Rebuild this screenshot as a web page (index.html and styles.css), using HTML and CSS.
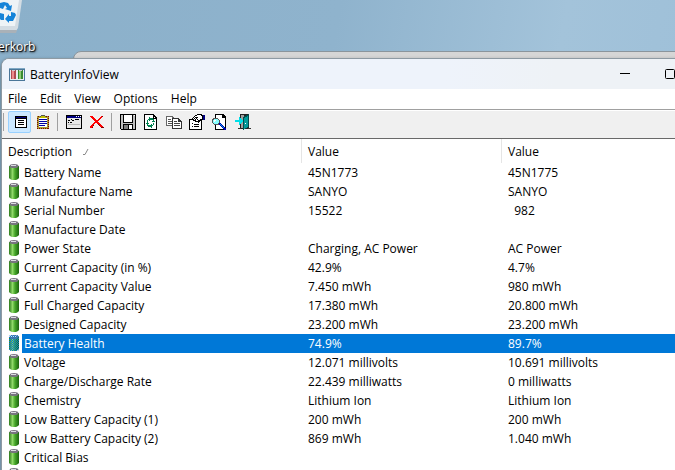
FILE: index.html
```
<!DOCTYPE html>
<html lang="en">
<head>
    <meta charset="UTF-8">
    <title>BatteryInfoView</title>
    <link rel="stylesheet" href="styles.css">
</head>
<body>
    <!-- shared icons -->
    <svg class="defs" aria-hidden="true">
        <linearGradient id="green">
            <stop offset="0" stop-color="#2c7a1a"/>
            <stop offset="0.35" stop-color="#8fd868"/>
            <stop offset="0.6" stop-color="#45a528"/>
            <stop offset="1" stop-color="#1d6410"/>
        </linearGradient>
        <pattern id="dots" width="2" height="2" patternUnits="userSpaceOnUse">
            <path fill="#0078d7" d="M0 0h1v1H0zM1 1h1v1H1z"/>
        </pattern>
        <symbol id="battery" viewBox="0 0 10 16">
            <path fill="url(#green)" d="M0 2h10v12l-1 1-2 1H3l-2-1-1-1z"/>
            <ellipse cx="5" cy="2" rx="4.500" ry="2" fill="#77747f"/>
            <path fill="#dddbe4" d="M2 1h5v1H2z"/>
        </symbol>
    </svg>

    <div class="desktop">
        <div class="shortcut">
            <svg class="bin" width="22" height="33" viewBox="0 0 22 33">
                <path fill="#d3dce3" d="M0 0h22l-4 28-2 3H0z"/>
                <path fill="#eef3f6" d="M0 0h19l-4 26H0z"/>
                <path fill="#a9b1b8" d="M0 30h17l-1 3H0z"/>
                <path fill="#1583d8" d="M0 3l4-1 4 1 2 3 2-1-1 6-6-2 2-1-2-3-2 4-3-1zM11 12l4 1-2-4 3 6-3 6H9v2l-4-4 4-5v2h2zM0 13l4 1v6H1l-1-1z"/>
            </svg>
            <span class="shortcut-label">erkorb</span>
        </div>

        <div class="back-window"></div>

        <div class="window">
            <div class="titlebar">
                <svg width="16" height="13" viewBox="0 0 16 13" shape-rendering="crispEdges">
                    <path fill="#4a7699" d="M0 0h16v13H0z"/>
                    <path fill="#e8eef1" d="M1 2h14v10H1z"/>
                    <path fill="#7fa8c4" d="M0 0h16v1H0z"/>
                    <path fill="#b04a50" d="M2 2h5v9H2z"/>
                    <path fill="#ec8a8d" d="M3 3h2v8H3z"/>
                    <path fill="#3b8a30" d="M9 2h5v9H9z"/>
                    <path fill="#8ccc72" d="M10 3h2v8h-2z"/>
                    <path fill="#c9c9d0" d="M3 2h3v1H3zM10 2h3v1h-3z"/>
                </svg>
                <h1 class="title">BatteryInfoView</h1>
                <button class="caption" aria-label="Minimize">
                    <svg width="10" height="10" viewBox="0 0 10 10"><path fill="#000" d="M0 4h10v1H0z"/></svg>
                </button>
                <button class="caption" aria-label="Maximize">
                    <svg width="12" height="10" viewBox="0 0 12 10"><rect x="0.5" y="0.5" width="9" height="9" rx="1" fill="none" stroke="#000"/></svg>
                </button>
                <button class="caption" aria-label="Close">
                    <svg width="10" height="10" viewBox="0 0 10 10"><path stroke="#000" d="M0 0l10 10M10 0L0 10"/></svg>
                </button>
            </div>

            <nav class="menubar">
                <button>File</button>
                <button>Edit</button>
                <button>View</button>
                <button>Options</button>
                <button>Help</button>
            </nav>

            <div class="toolbar">
                <button class="pressed" aria-label="Show all">
                    <svg viewBox="0 0 16 16">
                        <path d="M3 2h12v12H3z"/>
                        <path fill="#fff" d="M4 5h10v8H4z"/>
                        <path fill="#000080" d="M4 3h10v1H4z"/>
                        <path d="M6 6h6v1H6zM6 8h6v1H6zM6 10h6v1H6z"/>
                    </svg>
                </button>
                <button aria-label="Battery log">
                    <svg viewBox="0 0 16 16">
                        <path fill="#a89a30" d="M2 2h12v13H2z"/>
                        <path fill="none" stroke="#800000" stroke-dasharray="1 1" d="M2.500 2.500h11v12h-11z"/>
                        <path fill="#fff" d="M4 4h8v9H4z"/>
                        <path fill="#0000a0" d="M4 5h8v1H4zM4 7h8v1H4zM4 9h8v1H4zM4 11h6v1H4z"/>
                        <path fill="#c0c000" d="M5 2h6v2H5z"/>
                        <path fill="#555" d="M6 1h4v1H6zM5 2h1v1H5zM10 2h1v1h-1z"/>
                    </svg>
                </button>
                <span class="separator"></span>
                <button aria-label="Options">
                    <svg viewBox="0 0 16 16">
                        <path d="M0 1h16v14H0z"/>
                        <path fill="#e8e8e8" d="M1 4h14v10H1z"/>
                        <path fill="#000080" d="M1 2h14v2H1z"/>
                        <path fill="#fff" d="M10 2h1v1h-1zM12 2h1v1h-1zM14 2h1v1h-1z"/>
                        <path d="M2 6h2v1H2zM5 5h1v1H5zM6 6h2v1H6zM9 5h4v1H9zM2 8h1v1H2zM4 8h2v1H4z"/>
                        <path fill="#bbb" d="M2 10h12v1H2z"/>
                    </svg>
                </button>
                <button aria-label="Delete">
                    <svg viewBox="0 0 16 16">
                        <path fill="#f00" d="M1 2h3v1h1v1h1v1h1v1h2V5h1V4h1V3h1V2h2v1h-1v1h-1v1h-1v1h-1v1h-1v1h1v1h1v1h1v1h1v1h1v1h1v1h-2v-1h-2v-1h-1v-1h-1v-1H8V9H6v1H5v1H4v2H3v1H1v-2h1v-1h1v-1h1V9h1V8h1V7H5V6H4V5H3V4H2V3H1z"/>
                        <path fill="#800000" d="M3 13h1v1H3zM4 11h1v1H4zM9 10h1v1H9zM10 11h1v1h-1zM12 13h3v1h-3zM13 2h1v1h-1z"/>
                    </svg>
                </button>
                <span class="separator"></span>
                <button aria-label="Save">
                    <svg viewBox="0 0 16 16">
                        <path d="M0 0h16v16H1v-1H0z"/>
                        <path fill="#c0c0c0" d="M1 1h2v8h10V1h2v14H1z"/>
                        <path fill="#fff" d="M4 1h8v7H4z"/>
                        <path fill="#fff" d="M14 1h1v1h-1z"/>
                        <path d="M3 10h10v5H3z"/>
                        <path fill="#fff" d="M9 11h3v4H9z"/>
                        <path fill="#808080" d="M4 11h4v4H4z"/>
                    </svg>
                </button>
                <button aria-label="Refresh">
                    <svg viewBox="0 0 16 16">
                        <path d="M1 0h9l4 4v12H1z"/>
                        <path fill="#fff" d="M2 1h8v4h3v10H2z"/>
                        <path fill="#fff" d="M11 3h1v1h-1z"/>
                        <path fill="#008050" d="M6 3h1v1h3v1h1v2h1v1H9V7h1V6H7v1H6V6H5V5h1zM4 6h1v3H4zM9 14H8v-1H5v-1H4v-2H3V9h3v1H5v1h3v-1h1v1h1v1H9zM10 9h1v2h-1z"/>
                    </svg>
                </button>
                <button aria-label="Copy">
                    <svg viewBox="0 0 16 16">
                        <path fill="#666" d="M0 2h6l3 3v7H0z"/>
                        <path fill="#fff" d="M1 3h5v2h2v6H1z"/>
                        <path fill="#555" d="M2 5h3v1H2zM2 7h4v1H2zM2 9h4v1H2z"/>
                        <path fill="#333" d="M6 4h6l4 4v7H6z"/>
                        <path fill="#fff" d="M7 5h5v3h3v6H7z"/>
                        <path fill="#444" d="M8 7h3v1H8zM8 9h6v1H8zM8 11h6v1H8z"/>
                    </svg>
                </button>
                <button aria-label="Properties">
                    <svg viewBox="0 0 16 16">
                        <path d="M0 5h13v11H0z"/>
                        <path fill="#fff" d="M1 6h11v9H1z"/>
                        <path d="M3 9h1v1H3zM5 10h5v1H5zM3 12h1v1H3zM5 12h5v1H5z"/>
                        <path d="M3 4h1V3h1V2h1V1h2V0h5v1h2v5h-2v1h-2v1h-1v1H9V8H6V7H4V6H3z"/>
                        <path fill="#fff" d="M4 4h1v1H4zM5 5h1v1H5zM6 4h1v1H6zM5 3h1v1H5zM7 5h1v1H7zM6 2h2v1H6zM8 4h1v1H8zM8 1h4v1h1v3h-2v1H9V3H8zM7 6h2v1H7z"/>
                        <path fill="#000080" d="M14 1h2v5h-2z"/>
                    </svg>
                </button>
                <button aria-label="Find">
                    <svg viewBox="0 0 16 16">
                        <path d="M3 0h8l3 3v13H3z"/>
                        <path fill="#fff" d="M4 1h6v3h3v11H4z"/>
                        <path fill="#555" d="M1 4h5v1h1v1h1v4H7v1H2v-1H1V9H0V5h1z"/>
                        <path fill="#8ff" d="M2 5h4v1h1v3H6v1H2V9H1V6h1z"/>
                        <path fill="#fff" d="M2 6h2v1H3v1H2z"/>
                        <path fill="#0000b0" d="M7 9h2v1h1v1h1v1h1v1h1v1h1v2h-2v-1h-1v-1h-1v-1H9v-1H8v-1H7z"/>
                        <path fill="#00a0e0" d="M8 10h1v1H8zM9 11h1v1H9zM10 12h1v1h-1zM11 13h1v1h-1z"/>
                    </svg>
                </button>
                <button aria-label="Exit">
                    <svg viewBox="0 0 16 16">
                        <path fill="#222" d="M5 0h9v15H5z"/>
                        <path fill="#a0a0a0" d="M6 1h3v13H6z"/>
                        <path fill="#004c4c" d="M8 3l6-3v13l-6 3z"/>
                        <path fill="#009a9a" d="M9 4l4-2v11l-4 2z"/>
                        <path fill="#fff" d="M10 9h1v1h-1z"/>
                        <path fill="#00dfe8" d="M0 6h4V3h1v1h1v1h1v1h1v2H7v1H6v1H5v1H4V8H0z"/>
                        <path fill="#333" d="M3 14h3v1H3zM13 14h3v1h-3z"/>
                    </svg>
                </button>
            </div>

            <table class="list">
                <thead>
                    <tr>
                        <th class="description">Description
                            <svg class="sort" width="6" height="6" viewBox="0 0 6 6"><path fill="none" stroke="#888" d="M0 5.500h2L5 0"/></svg>
                        </th>
                        <th class="value">Value</th>
                        <th>Value</th>
                    </tr>
                </thead>
                <tbody>
                    <tr><td><div class="name"><svg><use href="#battery"/></svg><span>Battery Name</span></div></td><td>45N1773</td><td>45N1775</td></tr>
                    <tr><td><div class="name"><svg><use href="#battery"/></svg><span>Manufacture Name</span></div></td><td>SANYO</td><td>SANYO</td></tr>
                    <tr><td><div class="name"><svg><use href="#battery"/></svg><span>Serial Number</span></div></td><td>15522</td><td>&nbsp; 982</td></tr>
                    <tr><td><div class="name"><svg><use href="#battery"/></svg><span>Manufacture Date</span></div></td><td></td><td></td></tr>
                    <tr><td><div class="name"><svg><use href="#battery"/></svg><span>Power State</span></div></td><td>Charging, AC Power</td><td>AC Power</td></tr>
                    <tr><td><div class="name"><svg><use href="#battery"/></svg><span>Current Capacity (in %)</span></div></td><td>42.9%</td><td>4.7%</td></tr>
                    <tr><td><div class="name"><svg><use href="#battery"/></svg><span>Current Capacity Value</span></div></td><td>7.450 mWh</td><td>980 mWh</td></tr>
                    <tr><td><div class="name"><svg><use href="#battery"/></svg><span>Full Charged Capacity</span></div></td><td>17.380 mWh</td><td>20.800 mWh</td></tr>
                    <tr><td><div class="name"><svg><use href="#battery"/></svg><span>Designed Capacity</span></div></td><td>23.200 mWh</td><td>23.200 mWh</td></tr>
                    <tr class="selected"><td><div class="name"><svg><use href="#battery"/><rect width="10" height="16" rx="2" fill="url(#dots)"/></svg><span>Battery Health</span></div></td><td>74.9%</td><td>89.7%</td></tr>
                    <tr><td><div class="name"><svg><use href="#battery"/></svg><span>Voltage</span></div></td><td>12.071 millivolts</td><td>10.691 millivolts</td></tr>
                    <tr><td><div class="name"><svg><use href="#battery"/></svg><span>Charge/Discharge Rate</span></div></td><td>22.439 milliwatts</td><td>0 milliwatts</td></tr>
                    <tr><td><div class="name"><svg><use href="#battery"/></svg><span>Chemistry</span></div></td><td>Lithium Ion</td><td>Lithium Ion</td></tr>
                    <tr><td><div class="name"><svg><use href="#battery"/></svg><span>Low Battery Capacity (1)</span></div></td><td>200 mWh</td><td>200 mWh</td></tr>
                    <tr><td><div class="name"><svg><use href="#battery"/></svg><span>Low Battery Capacity (2)</span></div></td><td>869 mWh</td><td>1.040 mWh</td></tr>
                    <tr><td><div class="name"><svg><use href="#battery"/></svg><span>Critical Bias</span></div></td><td></td><td></td></tr>
                    <tr><td><div class="name"><svg><use href="#battery"/></svg><span></span></div></td><td></td><td></td></tr>
                </tbody>
            </table>
        </div>
    </div>
</body>
</html>
```

FILE: styles.css
```
* {
    box-sizing: border-box;
}
body {
    margin: 0;
    font: 12px/19px "Open Sans", "Noto Sans", sans-serif;
    color: #000;
}
button {
    border: 0;
    padding: 0;
    background: none;
    font: inherit;
    color: inherit;
}
svg {
    display: block;
    flex: none;
}
.defs {
    position: absolute;
    width: 0;
    height: 0;
}
.desktop {
    position: relative;
    height: 100vh;
    overflow: hidden;
    background: linear-gradient(100deg, #8bb0ca 0, #8fb3cd 45%, #a3c3da 75%, #9dbfd8 100%);
}

/* desktop icon */
.shortcut {
    position: absolute;
    top: 0;
    left: 0;
}
.shortcut-label {
    display: block;
    padding-top: 4px;
    margin-left: -2px;
    color: #fff;
    text-shadow: 1px 1px 1px #000, 1px 1px 3px #000;
}

/* windows */
.back-window {
    position: absolute;
    top: 51px;
    left: 73px;
    right: -80px;
    height: 60px;
    border: 1px solid #8b959c;
    border-radius: 8px 8px 0 0;
    background: #d6d6d6;
}
.window {
    position: absolute;
    top: 58px;
    left: 1px;
    right: -66px;
    bottom: -40px;
    overflow: hidden;
    border: 1px solid #8e9aa3;
    border-radius: 8px 8px 0 0;
    background: #fff;
    box-shadow: 0 2px 4px rgba(0, 0, 0, 0.4);
}
.titlebar {
    display: flex;
    align-items: center;
    height: 30px;
    padding-left: 7px;
    background: linear-gradient(90deg, #eef3fb 60%, #eef2f6 75%);
}
.title {
    flex: 1;
    margin: 0;
    padding-left: 5px;
    font-size: 12px;
    font-weight: 400;
}
.caption {
    display: flex;
    align-items: center;
    justify-content: center;
    width: 46px;
    height: 28px;
}
.menubar {
    display: flex;
    height: 21px;
    border-bottom: 1px solid #a0a0a0;
}
.menubar button {
    padding: 0 6px 0 7px;
    line-height: 20px;
}
.menubar button:first-child {
    padding-left: 6px;
}

/* toolbar */
.toolbar {
    display: flex;
    align-items: flex-start;
    height: 29px;
    padding-left: 1px;
    border-top: 1px solid #fff;
    border-bottom: 1px solid #696969;
    background: #f0f0f0;
}
.toolbar::before {
    content: "";
    width: 1px;
    height: 18px;
    margin: 2px 4px 0 0;
    background: #a0a0a0;
}
.toolbar button {
    display: flex;
    align-items: center;
    justify-content: center;
    width: 23px;
    height: 22px;
}
.toolbar .pressed {
    border: 1px solid #99d1ff;
    border-radius: 2px;
    background: #cce8ff;
}
.toolbar svg {
    width: 16px;
    height: 16px;
    shape-rendering: crispEdges;
}
.separator {
    width: 1px;
    height: 18px;
    margin: 2px 4px 0 3px;
    background: #a0a0a0;
}

/* battery list */
.list {
    width: 100%;
    table-layout: fixed;
    border-collapse: separate;
    border-spacing: 0;
    white-space: nowrap;
}
.list th {
    height: 24px;
    padding: 0 6px;
    border-left: 1px solid #e5e5e5;
    font-weight: 400;
    text-align: left;
}
.list th:first-child {
    border-left: 0;
}
.description {
    width: 299px;
}
.value {
    width: 200px;
}
.sort {
    display: inline-block;
    margin-left: 8px;
    vertical-align: 1px;
}
.list td {
    height: 19px;
    padding: 0 7px;
}
.list td:first-child {
    padding-right: 0;
}
.name {
    display: flex;
    align-items: flex-start;
    gap: 3px;
}
.name svg {
    width: 10px;
    height: 16px;
    margin-top: 1px;
}
.name span {
    flex: 1;
    height: 19px;
    padding-left: 2px;
}
.selected td,
.selected span {
    background: #0078d7;
    color: #fff;
}
.selected td:first-child {
    background: none;
}
```
